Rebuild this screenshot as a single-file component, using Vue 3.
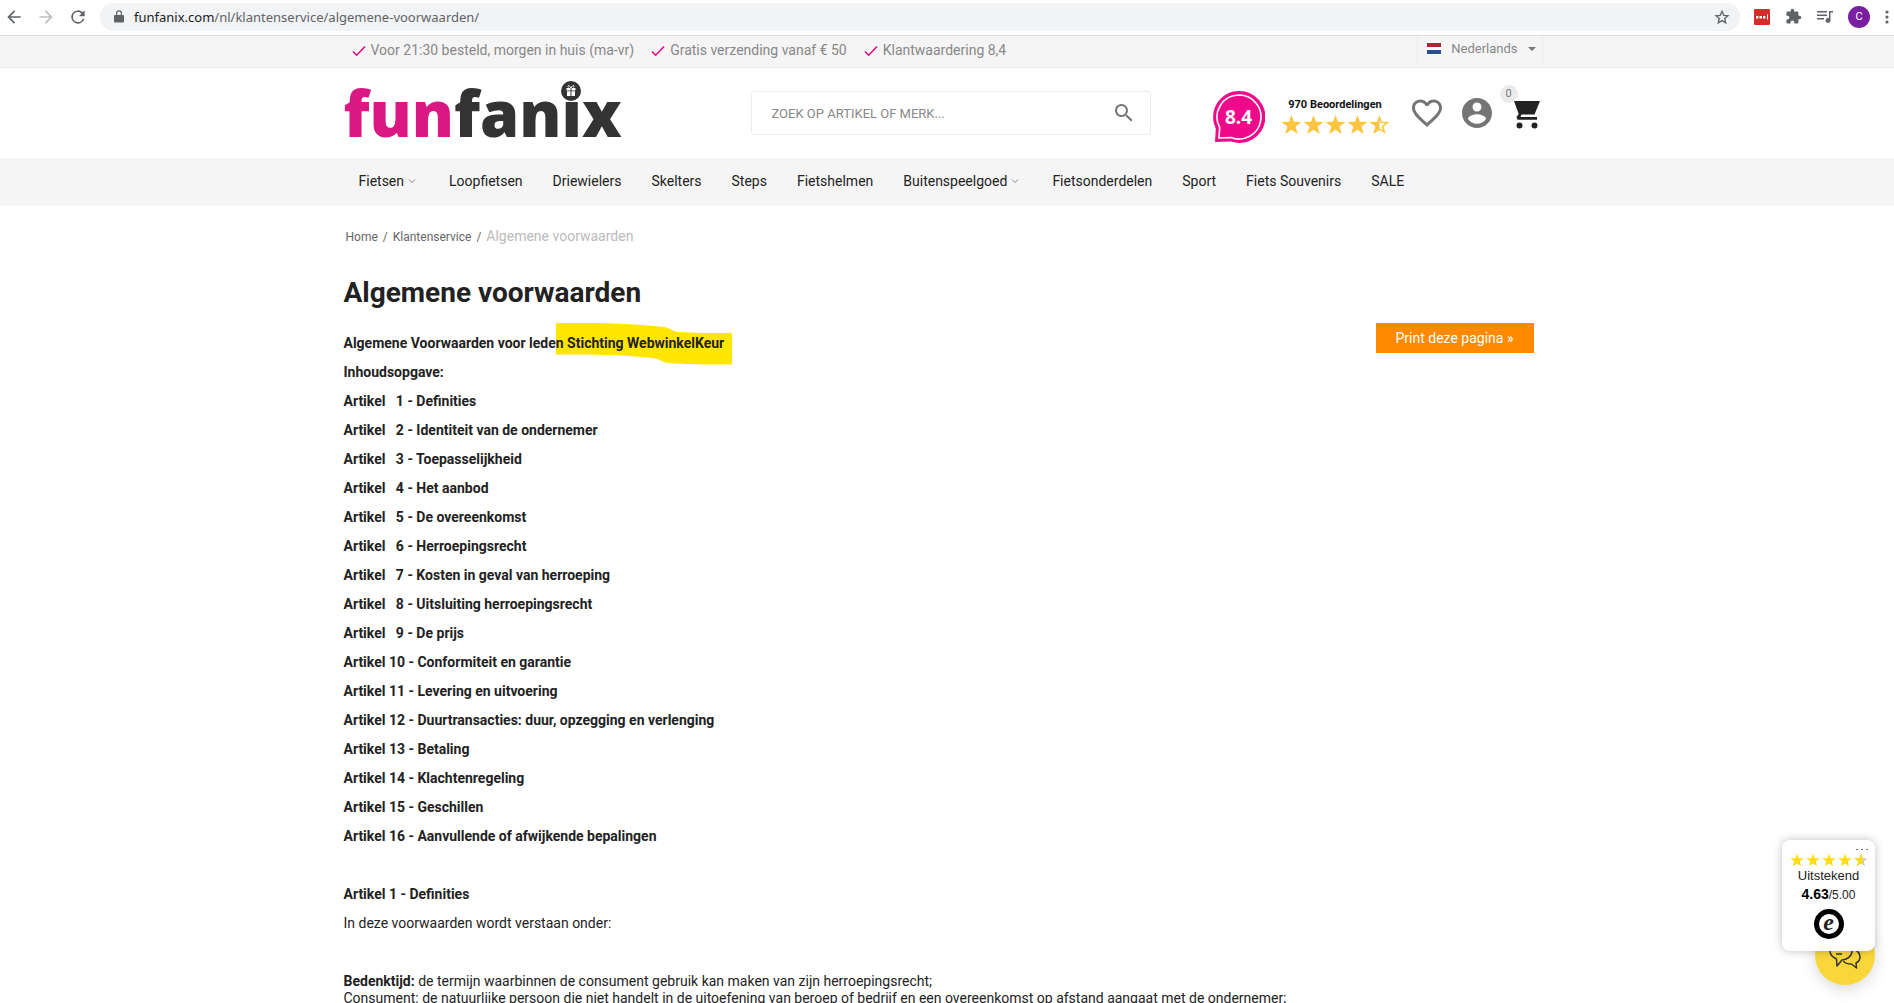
<script setup>
const usps = [
  'Voor 21:30 besteld, morgen in huis (ma-vr)',
  'Gratis verzending vanaf € 50',
  'Klantwaardering 8,4',
]

const menu = [
  { label: 'Fietsen', sub: true },
  { label: 'Loopfietsen' },
  { label: 'Driewielers' },
  { label: 'Skelters' },
  { label: 'Steps' },
  { label: 'Fietshelmen' },
  { label: 'Buitenspeelgoed', sub: true },
  { label: 'Fietsonderdelen' },
  { label: 'Sport' },
  { label: 'Fiets Souvenirs' },
  { label: 'SALE' },
]

const articles = [
  'Definities',
  'Identiteit van de ondernemer',
  'Toepasselijkheid',
  'Het aanbod',
  'De overeenkomst',
  'Herroepingsrecht',
  'Kosten in geval van herroeping',
  'Uitsluiting herroepingsrecht',
  'De prijs',
  'Conformiteit en garantie',
  'Levering en uitvoering',
  'Duurtransacties: duur, opzegging en verlenging',
  'Betaling',
  'Klachtenregeling',
  'Geschillen',
  'Aanvullende of afwijkende bepalingen',
]

const nbsp = '\u00a0'
const articleLabel = (n) => (n < 10 ? `Artikel${nbsp}${nbsp} ${n}` : `Artikel ${n}`)

const star = 'M12 1l2.800 7.900 8.700.3-6.800 5.200 2.400 8.400L12 18l-7.100 4.800 2.400-8.400L.5 9.200l8.700-.3z'
</script>

<template>
  <div class="page">
    <div class="browser">
      <button class="chrome-btn" aria-label="Terug">
        <svg width="20" height="20" viewBox="0 0 24 24"><path fill="#5f6368" d="M20 11H7.8l5.6-5.6L12 4l-8 8 8 8 1.4-1.4L7.8 13H20z" /></svg>
      </button>
      <button class="chrome-btn" aria-label="Vooruit">
        <svg width="20" height="20" viewBox="0 0 24 24"><path fill="#bcbec1" d="M12 4l-1.4 1.4 5.6 5.6H4v2h12.2l-5.6 5.6L12 20l8-8z" /></svg>
      </button>
      <button class="chrome-btn" aria-label="Vernieuwen">
        <svg width="20" height="20" viewBox="0 0 24 24"><path fill="#5f6368" d="M17.6 6.4A8 8 0 1 0 19.7 14h-2.1A6 6 0 1 1 12 6c1.7 0 3.1.7 4.2 1.8L13 11h7V4z" /></svg>
      </button>
      <div class="address">
        <svg width="10" height="13" viewBox="0 0 10 13"><path fill="#5f6368" fill-rule="evenodd" d="M9 5H8V3.200a3 3 0 0 0-6 0V5H1a1 1 0 0 0-1 1v5.500a1 1 0 0 0 1 1h8a1 1 0 0 0 1-1V6a1 1 0 0 0-1-1zM3.200 5V3.200a1.800 1.800 0 0 1 3.600 0V5z" /></svg>
        <span class="url"><span class="domain">funfanix.com</span>/nl/klantenservice/algemene-voorwaarden/</span>
        <svg width="16" height="16" viewBox="0 0 24 24"><path fill="none" stroke="#5f6368" stroke-width="2" d="M12 3.500l2.600 6 6.400.6-4.900 4.300 1.500 6.400-5.600-3.400-5.600 3.400 1.500-6.400L3 10.100l6.400-.6z" /></svg>
      </div>
      <div class="extensions">
        <svg width="16" height="16" viewBox="0 0 16 16"><rect width="16" height="16" rx="1" fill="#d32d27" /><path fill="#fff" d="M2 7h2.400v2.400H2zM5.500 7h2.400v2.400H5.500zM9 7h2.400v2.400H9zM13 5.500h1v5h-1z" /></svg>
        <svg width="17" height="17" viewBox="0 0 24 24"><path fill="#5f6368" d="M20.500 11H19V7a2 2 0 0 0-2-2h-4V3.500a2.500 2.500 0 0 0-5 0V5H4a2 2 0 0 0-2 2v3.800h1.500a2.700 2.700 0 0 1 0 5.400H2V20a2 2 0 0 0 2 2h3.800v-1.500a2.700 2.700 0 0 1 5.400 0V22H17a2 2 0 0 0 2-2v-4h1.500a2.500 2.500 0 0 0 0-5z" /></svg>
        <svg width="16" height="14" viewBox="0 0 16 14"><path fill="none" stroke="#5f6368" stroke-width="1.500" d="M0 1.700h10M0 5.200h10M0 8.700h7M12.700 10V1.700H16" /><circle cx="11" cy="10.500" r="2.400" fill="#5f6368" /></svg>
        <span class="avatar">C</span>
        <svg width="4" height="14" viewBox="0 0 4 14"><g fill="#5f6368"><circle cx="2" cy="2" r="1.600" /><circle cx="2" cy="7" r="1.600" /><circle cx="2" cy="12" r="1.600" /></g></svg>
      </div>
    </div>

    <div class="topbar">
      <div class="container topbar-inner">
        <ul class="usps">
          <li v-for="usp in usps" :key="usp">
            <svg width="14" height="12" viewBox="0 0 14 12"><path fill="none" stroke="#e5097f" stroke-width="1.600" d="M1 6.500l3.700 3.700L13 1.500" /></svg>
            {{ usp }}
          </li>
        </ul>
        <button class="language">
          <svg width="14" height="11" viewBox="0 0 14 11"><path fill="#a32a35" d="M0 0h14v4H0z" /><path fill="#fff" d="M0 4h14v3H0z" /><path fill="#2b4f8e" d="M0 7h14v4H0z" /></svg>
          <span>Nederlands</span>
          <svg width="8" height="4" viewBox="0 0 8 4"><path fill="#777" d="M0 0h8L4 4z" /></svg>
        </button>
      </div>
    </div>

    <header class="container header">
      <a class="logo" href="#" aria-label="funfanix">
        <span class="fun">fun</span><span>fan</span><span class="logo-i">i<svg class="gift" width="20" height="20" viewBox="0 0 20 20"><circle cx="10" cy="10" r="10" fill="#333" /><path fill="#fff" d="M5.500 7h4v2.500h-4zM10.500 7h4v2.500h-4zM6 10.300h3.500V15H6zM10.500 10.300H14V15h-3.500z" /><path fill="none" stroke="#fff" d="M10 7C8 3 6 4.500 7.500 6.500M10 7c2-4 4-2.500 2.500-.5" /></svg></span><span>x</span>
      </a>

      <form class="search" @submit.prevent>
        <input type="text" aria-label="Zoeken" placeholder="ZOEK OP ARTIKEL OF MERK..." />
        <button aria-label="Zoek">
          <svg width="24" height="24" viewBox="0 0 24 24"><path fill="#757575" d="M15.500 14h-.8l-.3-.3A6.500 6.500 0 1 0 13.700 14.400l.3.300v.8l5 5 1.500-1.500zm-6 0a4.500 4.500 0 1 1 0-9 4.500 4.500 0 0 1 0 9z" /></svg>
        </button>
      </form>

      <div class="tools">
        <div class="score">
          <svg width="52" height="52" viewBox="0 0 52 52"><path fill="#ef0a8b" d="M26 0a26 26 0 1 1-8 50.600L2 51l.8-13.500A26 26 0 0 1 26 0z" /><path fill="none" stroke="#fff" stroke-width="1.600" d="M26 4a22 22 0 1 1-8 42.500L6 47l.7-10.500A22 22 0 0 1 26 4z" /></svg>
          <span>8.4</span>
        </div>
        <div class="reviews">
          <strong>970 Beoordelingen</strong>
          <div class="stars">
            <svg v-for="n in 4" :key="n" width="21" height="21" viewBox="0 0 24 24"><path fill="#fbc540" :d="star" /></svg>
            <svg width="21" height="21" viewBox="0 0 24 24"><path fill="#fbc540" fill-rule="evenodd" d="M12 1l2.800 7.900 8.700.3-6.800 5.200 2.400 8.400L12 18l-7.100 4.800 2.400-8.400L.5 9.200l8.700-.3zM12 6v10l4 2.700-1.400-5 3.900-3-5-.2z" /></svg>
          </div>
        </div>
        <a class="tool heart" href="#" aria-label="Verlanglijst">
          <svg width="36" height="36" viewBox="0 0 24 24"><path fill="#757575" d="M16.500 3c-1.740 0-3.410.81-4.500 2.090C10.910 3.810 9.240 3 7.500 3 4.420 3 2 5.420 2 8.500c0 3.780 3.400 6.860 8.550 11.540L12 21.350l1.450-1.320C18.600 15.360 22 12.280 22 8.500 22 5.420 19.580 3 16.500 3zm-4.400 15.550l-.1.100-.1-.1C7.140 14.240 4 11.390 4 8.500 4 6.500 5.500 5 7.500 5c1.540 0 3.040.99 3.570 2.360h1.870C13.460 5.990 14.960 5 16.500 5c2 0 3.500 1.500 3.500 3.500 0 2.890-3.140 5.740-7.900 10.050z" /></svg>
        </a>
        <a class="tool user" href="#" aria-label="Account">
          <svg width="36" height="36" viewBox="0 0 24 24"><path fill="#757575" d="M12 2C6.480 2 2 6.480 2 12s4.480 10 10 10 10-4.480 10-10S17.520 2 12 2zm0 3c1.660 0 3 1.340 3 3s-1.340 3-3 3-3-1.340-3-3 1.340-3 3-3zm0 14.200c-2.500 0-4.710-1.280-6-3.220.03-1.990 4-3.080 6-3.080 1.990 0 5.970 1.090 6 3.080-1.290 1.940-3.500 3.220-6 3.220z" /></svg>
        </a>
        <a class="tool cart" href="#" aria-label="Winkelwagen">
          <span class="count">0</span>
          <svg width="26" height="28" viewBox="0 0 26 28"><path fill="#222" d="M0 0h26l-5.500 13.500H7.500L6.500 16H23v2.800H3.500L2.500 16l2.200-3z" /><circle cx="5.500" cy="24.500" r="3" fill="#222" /><circle cx="20.500" cy="24.500" r="3" fill="#222" /></svg>
        </a>
      </div>
    </header>

    <nav class="menu">
      <ul class="container">
        <li v-for="item in menu" :key="item.label">
          <a href="#">{{ item.label }}</a>
          <svg v-if="item.sub" width="8" height="5" viewBox="0 0 8 5"><path fill="none" stroke="#888" d="M1 .5l3 3 3-3" /></svg>
        </li>
      </ul>
    </nav>

    <main class="container">
      <div class="crumbs">
        <a href="#">Home</a><span>/</span><a href="#">Klantenservice</a><span>/</span><span class="current">Algemene voorwaarden</span>
      </div>
      <h1>Algemene voorwaarden</h1>
      <div class="content">
        <article>
          <p>
            <strong>Algemene Voorwaarden voor lede<span class="marked"><svg class="marker" width="176" height="42" viewBox="0 0 176 42"><path fill="#ffe600" d="M0 0h30C60 0 90 2 108 4c6 1 8 4 14 5 14 1 36 1 54 1v31.500c-24 0-46 0-64-1.500-6-1-8-4-16-5C70 32 40 31 0 31.500z" /></svg><span class="marked-text">n Stichting WebwinkelKeur</span></span></strong>
          </p>
          <p><strong>Inhoudsopgave:</strong></p>
          <p v-for="(title, i) in articles" :key="title">
            <strong>{{ articleLabel(i + 1) }} - {{ title }}</strong>
          </p>
          <p>&nbsp;</p>
          <p><strong>Artikel 1 - Definities</strong></p>
          <p>In deze voorwaarden wordt verstaan onder:</p>
          <p>&nbsp;</p>
          <p>
            <strong>Bedenktijd:</strong> de termijn waarbinnen de consument gebruik kan maken van zijn herroepingsrecht;<br />
            Consument: de natuurlijke persoon die niet handelt in de uitoefening van beroep of bedrijf en een overeenkomst op afstand aangaat met de ondernemer;
          </p>
        </article>
        <button class="print">Print deze pagina »</button>
      </div>
    </main>

    <button class="chat" aria-label="Chat">
      <svg width="34" height="30" viewBox="0 0 34 30"><g fill="none" stroke="#333" stroke-width="1.500" stroke-linejoin="round"><path d="M13 2c6 0 11 4 11 9s-5 9-10 9l-5 6-.5-7C4 17 2 14.500 2 11c0-5 5-9 11-9z" /><path d="M26 9c4 2 6 5 6 8 0 3-2 5-4 6l.5 5-5-4c-4 0-7-1-8-3" /><path d="M8 9h10M8 14h6" /></g></svg>
    </button>
    <aside class="trust">
      <span class="more"><i></i><i></i><i></i></span>
      <div class="trust-stars">
        <svg v-for="n in 4" :key="n" width="14" height="14" viewBox="0 0 24 24"><path fill="#ffdc0f" :d="star" /></svg>
        <svg width="14" height="14" viewBox="0 0 24 24"><path fill="#ccc" :d="star" /><path fill="#ffdc0f" d="M15 9L12 1 9.200 8.900.5 9.200l6.800 5.200-2.400 8.400L12 18l3 2z" /></svg>
      </div>
      <span class="verdict">Uitstekend</span>
      <span class="rating"><b>4.63</b>/5.00</span>
      <span class="seal">e</span>
    </aside>
  </div>
</template>

<style>
body {
  margin: 0;
  background: #fff;
}
</style>

<style scoped>
.page {
  position: relative;
  height: 100vh;
  overflow: hidden;
  color: #222;
  font: 14px/17px Roboto, sans-serif;
}

.page * {
  box-sizing: border-box;
}

button {
  padding: 0;
  border: 0;
  background: none;
  font: inherit;
  color: inherit;
}

a {
  color: inherit;
  text-decoration: none;
}

ul {
  list-style: none;
  margin: 0;
  padding: 0;
}

svg {
  display: block;
  flex: none;
}

.container {
  max-width: 1190px;
  margin: 0 auto;
}

.topbar,
.menu {
  padding-right: 17px;
}

.browser {
  display: flex;
  align-items: center;
  height: 36px;
  padding: 0 3px 2px 4px;
  border-bottom: 1px solid #d9dadc;
}

.chrome-btn {
  width: 20px;
  margin-right: 12px;
}

.address {
  flex: 1;
  display: flex;
  align-items: center;
  gap: 10px;
  height: 28px;
  padding: 0 10px 0 14px;
  border-radius: 14px;
  background: #f1f3f4;
}

.url {
  flex: 1;
  color: #5f6368;
  font: 13px/18px "Noto Sans", sans-serif;
}

.domain {
  color: #202124;
}

.extensions {
  display: flex;
  align-items: center;
  gap: 15px;
  padding: 0 2px 0 14px;
}

.avatar {
  width: 22px;
  height: 22px;
  border-radius: 50%;
  background: #7b1fa2;
  color: #fff;
  font-size: 11px;
  line-height: 22px;
  text-align: center;
}

.topbar {
  height: 32px;
  border-bottom: 1px solid #ececec;
  background: #f5f5f5;
  color: #888;
}

.topbar-inner {
  display: flex;
  justify-content: space-between;
  height: 100%;
}

.usps {
  display: flex;
  gap: 17px;
  padding: 0 0 2px 8px;
}

.usps li {
  display: flex;
  align-items: center;
  gap: 5px;
}

.language {
  display: flex;
  align-items: center;
  gap: 10px;
  margin-right: -9px;
  padding: 0 6px 6px 9px;
  border: 1px solid #ececec;
  border-width: 0 1px;
  font-size: 13px;
}

.header {
  display: grid;
  grid-template-columns: 407px 400px 1fr;
  align-items: center;
  height: 90px;
  max-width: 1207px;
  padding-right: 11px;
}

.logo {
  display: flex;
  color: #333;
  font: 900 63px/60px "Noto Sans", "Open Sans", sans-serif;
}

.fun {
  color: #da1884;
}

.logo-i {
  position: relative;
}

.gift {
  position: absolute;
  top: -2px;
  left: 0;
}

.search {
  display: flex;
  align-items: center;
  height: 44px;
  border: 1px solid #ebebeb;
  border-radius: 3px;
}

.search input {
  flex: 1;
  padding: 2px 0 0 20px;
  border: 0;
  outline: 0;
  background: none;
  font: 13px/18px Roboto, sans-serif;
}

.search input::placeholder {
  color: #888;
}

.search button {
  margin-right: 14px;
}

.tools {
  display: flex;
  align-items: center;
  justify-content: flex-end;
}

.score {
  position: relative;
  height: 52px;
  margin-top: 8px;
}

.score span {
  position: absolute;
  inset: 0;
  color: #fff;
  font: 700 19px/52px "Open Sans", sans-serif;
  text-align: center;
}

.reviews {
  display: flex;
  flex-direction: column;
  align-items: center;
  margin: 4px 19px 0 16px;
}

.reviews strong {
  color: #111;
  font-size: 11px;
  line-height: 18px;
}

.stars {
  display: flex;
  gap: 1px;
}

.tool {
  position: relative;
}

.user {
  margin: 0 19px 0 14px;
}

.cart {
  margin-top: 4px;
}

.count {
  position: absolute;
  top: -16px;
  left: -14px;
  width: 18px;
  height: 18px;
  border-radius: 50%;
  background: #ebebeb;
  color: #777;
  font-size: 11px;
  line-height: 18px;
  text-align: center;
}

.menu {
  background: #f5f5f5;
}

.menu ul {
  display: flex;
  align-items: center;
  gap: 30px;
  height: 48px;
  padding: 0 0 2px 15px;
}

.menu li {
  display: flex;
  align-items: center;
  gap: 4px;
}

.menu li svg {
  margin-right: 3px;
}

main.container {
  max-width: 1207px;
  padding-right: 17px;
}

.crumbs {
  display: flex;
  align-items: baseline;
  gap: 5px;
  padding: 22px 0 0 2px;
  color: #666;
  font-size: 12px;
}

.current {
  color: #bbb;
  font-size: 14px;
}

h1 {
  margin: 30px 0 13px;
  font-size: 28px;
  font-weight: 700;
  line-height: 34px;
}

.content {
  display: flex;
  align-items: flex-start;
  justify-content: space-between;
}

article {
  padding-top: 12px;
}

p {
  margin: 0 0 12px;
}

strong {
  font-weight: 700;
}

.marked,
.marked-text {
  position: relative;
}

.marker {
  position: absolute;
  top: -12px;
  left: 0;
}

.print {
  flex: none;
  width: 158px;
  height: 30px;
  background: #ff8a00;
  color: #fff;
}

.trust {
  position: absolute;
  right: 19px;
  bottom: 52px;
  display: flex;
  flex-direction: column;
  align-items: center;
  width: 93px;
  height: 111px;
  padding-top: 13px;
  border-radius: 8px;
  background: #fff;
  box-shadow: 0 0 10px rgba(0, 0, 0, 0.25);
  color: #222;
  font: 12px/18px "Liberation Sans", sans-serif;
}

.more {
  position: absolute;
  top: 9px;
  right: 7px;
  display: flex;
  gap: 3px;
}

.more i {
  width: 2px;
  height: 1px;
  background: #777;
}

.trust-stars {
  display: flex;
  gap: 2px;
}

.verdict {
  font-size: 13px;
}

.rating b {
  color: #000;
  font-size: 14px;
}

.seal {
  width: 30px;
  height: 30px;
  margin-top: 5px;
  border: 5px solid #000;
  border-radius: 50%;
  font: italic 700 24px/16px "Liberation Serif", serif;
  text-align: center;
}

.chat {
  position: absolute;
  right: 19px;
  bottom: 18px;
  display: grid;
  place-items: center;
  width: 60px;
  height: 60px;
  border-radius: 50%;
  background: #f9d73a;
  box-shadow: 0 4px 16px rgba(0, 0, 0, 0.15);
}
</style>
